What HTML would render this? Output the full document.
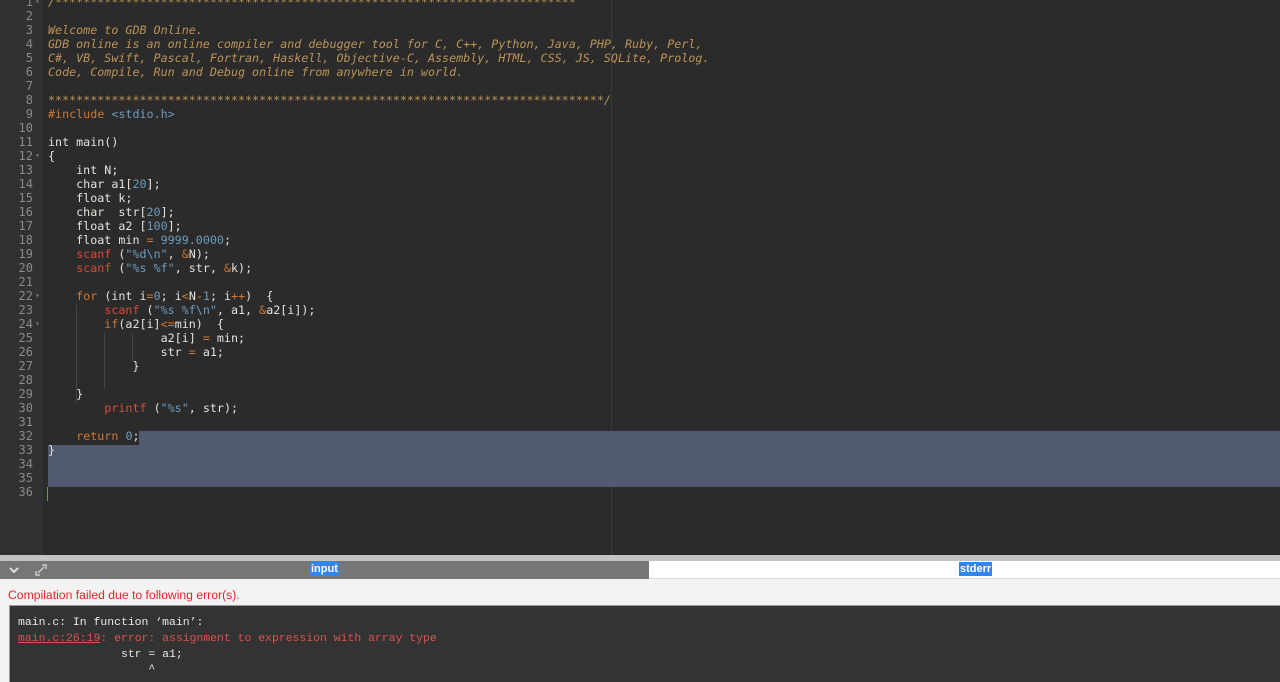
<!DOCTYPE html>
<html><head><meta charset="utf-8"><style>
*{margin:0;padding:0;box-sizing:border-box}
body{width:1280px;height:682px;overflow:hidden;background:#2b2b2b;position:relative;font-family:"DejaVu Sans Mono","Liberation Mono",monospace}
#gut{position:absolute;left:0;top:0;width:43px;height:555px;background:#313131}
#ed{position:absolute;left:43px;top:0;width:1237px;height:555px;background:#2b2b2b;overflow:hidden}
.pm{position:absolute;left:568px;top:0;width:1px;height:555px;background:#3a3a3a}
.ln{position:absolute;left:0;width:33px;text-align:right;color:#8a8a8a;font-size:12px;line-height:14px;height:14px}
.fold{position:absolute;left:35px;color:#777;font-size:8px;line-height:14px}
.l{position:absolute;left:48px;white-space:pre;color:#e6e1dc;font-size:11.7px;line-height:14px;height:14px}
.c{color:#bc9458;font-style:italic}.k{color:#cc7833}.n{color:#6d9cbe}.f{color:#da4939}.o{color:#cc7833}
.sel{position:absolute;background:#525a72}
.g{position:absolute;width:1px;background:#444}
#bar1{position:absolute;left:0;top:555px;width:1280px;height:6px;background:#c3c3c3}
#tabL{position:absolute;left:0;top:561px;width:649px;height:18px;background:#767676}
#tabR{position:absolute;left:649px;top:561px;width:631px;height:18px;background:#fff;border-bottom:1px solid #ddd}
.tl{position:absolute;top:562px;height:14px;background:#2f86f0;color:#fff;font:bold 11px "Liberation Sans",sans-serif;line-height:14px;padding:0 1px}
#low{position:absolute;left:0;top:579px;width:1280px;height:103px;background:#f3f3f3}
#err{position:absolute;left:8px;top:588px;color:#e8232a;font:12.2px "Liberation Sans",sans-serif}
#term{position:absolute;left:9px;top:605px;width:1271px;height:77px;background:#333;border-top:1px solid #999;border-left:1px solid #999}
.t{position:absolute;left:8px;white-space:pre;font:11.45px "Liberation Mono",monospace;color:#e8e8e8}
</style></head><body>
<div id="gut"></div>
<div id="ed"><div class="pm"></div></div>
<div class="sel" style="left:139px;top:431px;width:1141px;height:14px"></div>
<div class="sel" style="left:48px;top:445px;width:1232px;height:42px"></div>
<div style="position:absolute;left:47px;top:487px;width:1px;height:14px;background:#6a9a3a"></div>
<div class="g" style="left:76px;top:305px;height:98px"></div>
<div class="g" style="left:104px;top:333px;height:56px"></div>
<div class="g" style="left:132px;top:333px;height:28px"></div>
<div id="lines"></div>
<div id="bar1"></div><div id="tabL"></div><div id="tabR"></div>
<svg style="position:absolute;left:8px;top:565px" width="12" height="10"><path d="M2 3 L6 7 L10 3" stroke="#ddd" stroke-width="2" fill="none"/></svg>
<svg style="position:absolute;left:34px;top:563px" width="14" height="14"><path d="M4 10 L10 4 M8 2 H12 V6 M2 8 V12 H6" stroke="#ccc" stroke-width="1.5" fill="none"/></svg>
<div class="tl" style="left:310px">input</div>
<div class="tl" style="left:959px">stderr</div>
<div id="low"></div>
<div id="err">Compilation failed due to following error(s).</div>
<div id="term">
<div class="t" style="top:10px">main.c: In function ‘main’:</div>
<div class="t" style="top:26px;color:#d9534f"><u>main.c:26:19</u>: error: assignment to expression with array type</div>
<div class="t" style="top:42px">               str = a1;</div>
<div class="t" style="top:57px">                   ^</div>
</div>
<script>
var L=[
'<span class="c">/**************************************************************************</span>',
'',
'<span class="c">Welcome to GDB Online.</span>',
'<span class="c">GDB online is an online compiler and debugger tool for C, C++, Python, Java, PHP, Ruby, Perl,</span>',
'<span class="c">C#, VB, Swift, Pascal, Fortran, Haskell, Objective-C, Assembly, HTML, CSS, JS, SQLite, Prolog.</span>',
'<span class="c">Code, Compile, Run and Debug online from anywhere in world.</span>',
'',
'<span class="c">*******************************************************************************/</span>',
'<span class="k">#include</span> <span class="n">&lt;stdio.h&gt;</span>',
'',
'int main()',
'{',
'    int N;',
'    char a1[<span class="n">20</span>];',
'    float k;',
'    char  str[<span class="n">20</span>];',
'    float a2 [<span class="n">100</span>];',
'    float min <span class="o">=</span> <span class="n">9999.0000</span>;',
'    <span class="f">scanf</span> (<span class="n">"%d\\n"</span>, <span class="o">&amp;</span>N);',
'    <span class="f">scanf</span> (<span class="n">"%s %f"</span>, str, <span class="o">&amp;</span>k);',
'',
'    <span class="k">for</span> (int i<span class="o">=</span><span class="n">0</span>; i<span class="o">&lt;</span>N<span class="o">-</span><span class="n">1</span>; i<span class="o">++</span>)  {',
'        <span class="f">scanf</span> (<span class="n">"%s %f\\n"</span>, a1, <span class="o">&amp;</span>a2[i]);',
'        <span class="k">if</span>(a2[i]<span class="o">&lt;=</span>min)  {',
'                a2[i] <span class="o">=</span> min;',
'                str <span class="o">=</span> a1;',
'            }',
'',
'    }',
'        <span class="f">printf</span> (<span class="n">"%s"</span>, str);',
'',
'    <span class="k">return</span> <span class="n">0</span>;',
'}','','',''];
var h='';
var folds={1:1,12:1,22:1,24:1};
for(var i=0;i<36;i++){var t=14*i-5;
h+='<div class="ln" style="top:'+t+'px">'+(i+1)+'</div>';
if(folds[i+1])h+='<div class="fold" style="top:'+t+'px">▾</div>';
h+='<div class="l" style="top:'+t+'px">'+L[i]+'</div>';}
document.getElementById('lines').innerHTML=h;
</script>
</body></html>
